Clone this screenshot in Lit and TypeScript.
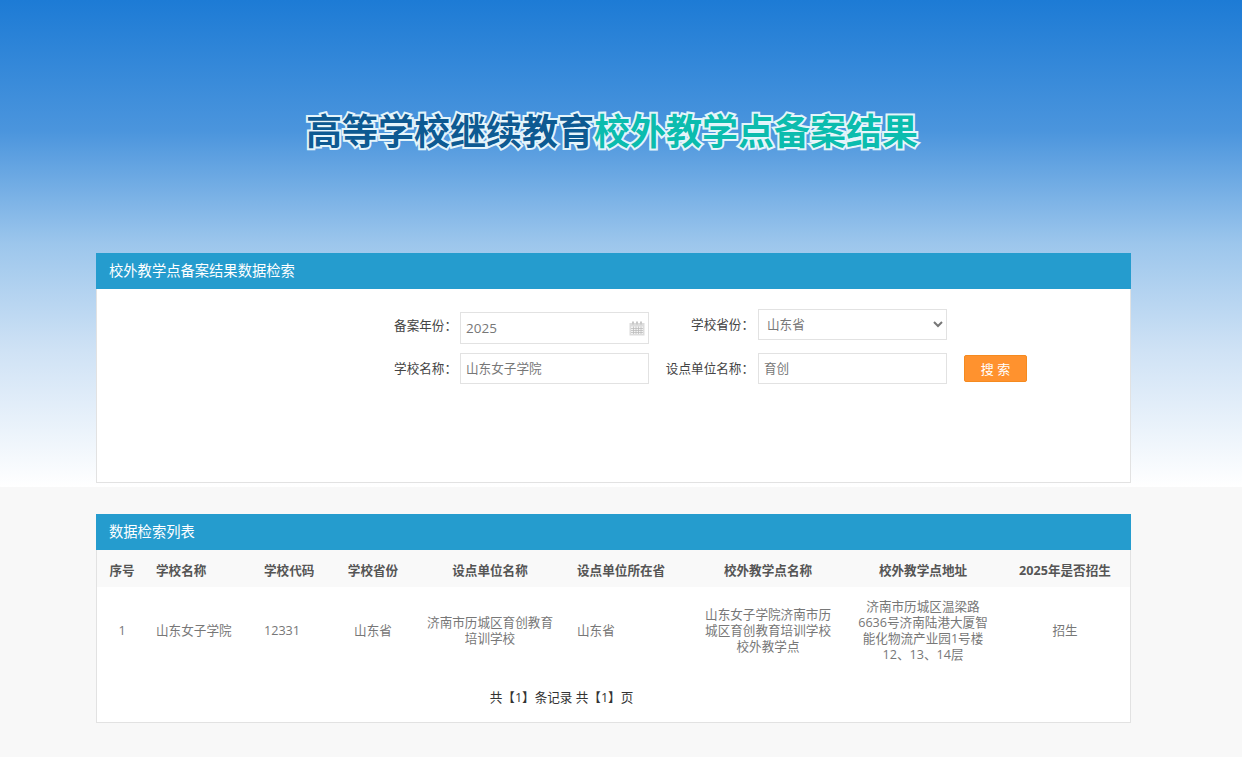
import { LitElement, html, css } from "lit";
import { customElement } from "lit/decorators.js";

@customElement("app-root")
export class AppRoot extends LitElement {
  static styles = css`
    :host {
      display: block;
      min-height: 757px;
      font-family: "Open Sans", "Noto Sans CJK SC", sans-serif;
      font-size: 12.6px;
      color: #777;
      background: #f8f8f8 linear-gradient(180deg, #1d7bd5 0%, #4b95dd 27%, #9cc6ec 50%, #cfe2f5 72%, #ffffff 100%) no-repeat;
      background-size: 100% 487px;
    }
    .hero {
      height: 253px;
      display: flex;
      justify-content: center;
      padding: 102px 18px 0 0;
      box-sizing: border-box;
    }
    .title {
      margin: 0;
      height: 54px;
      line-height: 54px;
      font-size: 36px;
      font-weight: 700;
      font-family: "Noto Sans CJK SC", sans-serif;
      white-space: nowrap;
      -webkit-text-stroke: 4px #e2f4fb;
      paint-order: stroke fill;
      text-shadow: 0 0 2px rgba(255, 255, 255, 0.7);
    }
    .t1 { color: #0d5a92; }
    .t2 { color: #0bbcae; }
    .wrap { width: 1035px; margin-left: 96px; }
    .panel {
      background: #fff;
      border: 1px solid #e2e2e2;
      border-top: 0;
      box-sizing: border-box;
    }
    .panel-head {
      height: 36px;
      line-height: 36px;
      margin: 0 -1px;
      padding-left: 13px;
      background: #259cce;
      color: #fff;
      font-size: 14.3px;
    }
    .search { height: 230px; margin-bottom: 31px; }
    .form {
      display: grid;
      grid-template-columns: 363px 189px 109px 189px 80px;
      grid-template-rows: 44px 31px;
      padding: 20px 0 0 0;
      color: #444;
    }
    .label { text-align: right; padding-right: 3px; line-height: 31px; color: #444; }
    .label.first { padding-top: 1px; }
    .label.r { padding-right: 4px; }
    .control {
      box-sizing: border-box;
      width: 189px;
      height: 31px;
      border: 1px solid #e2e2e2;
      background: #fff;
      font: inherit;
      color: #777;
      padding: 0 5px 2px;
      outline: none;
      display: block;
    }
    .date {
      height: 32px;
      margin-top: 3px;
      display: flex;
      align-items: center;
      justify-content: space-between;
      padding: 0 3px 0 5px;
      font-size: 13.5px;
      line-height: 28px;
    }
    .date svg { display: block; }
    select.control { padding: 0 4px; }
    .btn-cell { padding-left: 17px; padding-top: 2px; }
    .btn {
      display: block;
      width: 63px;
      height: 27px;
      box-sizing: border-box;
      border: 1px solid #f58a1f;
      border-radius: 2px;
      background: #ff922e;
      color: #fff;
      font: inherit;
      font-size: 13px;
      padding: 0;
    }
    .list { height: 209px; }
    table {
      width: 1033px;
      border-collapse: collapse;
      table-layout: fixed;
    }
    th {
      height: 37px;
      padding: 1px 9px 0;
      background: #f9f9f9;
      color: #555;
      font-weight: 700;
      box-sizing: border-box;
    }
    td {
      padding: 12px 9px 10px;
      height: 86px;
      line-height: 16px;
      box-sizing: border-box;
    }
    th, td { text-align: center; }
    .left { text-align: left; }
    .pager { text-align: center; color: #333; line-height: 16px; padding: 17px 104px 0 0; }
  `;

  render() {
    return html`
      <div class="hero">
        <h1 class="title"><span class="t1">高等学校继续教育</span><span class="t2">校外教学点备案结果</span></h1>
      </div>
      <div class="wrap">
        <section class="panel search">
          <div class="panel-head">校外教学点备案结果数据检索</div>
          <div class="form">
            <div class="label first">备案年份：</div>
            <div class="control date">
              <span>2025</span>
              <svg width="16" height="15" viewBox="0 0 16 15" fill="#c8c8c8">
                <rect x="0.5" y="2" width="15" height="12.5" fill="#dcdcdc"></rect>
                <rect x="3" y="0.5" width="2" height="3"></rect>
                <rect x="7" y="0.5" width="2" height="3"></rect>
                <rect x="11" y="0.5" width="2" height="3"></rect>
                <rect x="2" y="5.5" width="12" height="7.5" fill="#f3f3f3"></rect>
                <path d="M2 7.5h12M2 9.5h12M2 11.5h12M4.5 5.5v7.5M7 5.5v7.5M9.5 5.5v7.5M12 5.5v7.5" stroke="#bcbcbc" stroke-width="0.8"></path>
              </svg>
            </div>
            <div class="label r">学校省份：</div>
            <select class="control"><option>山东省</option></select>
            <div></div>

            <div class="label">学校名称：</div>
            <input class="control" .value=${"山东女子学院"} />
            <div class="label r">设点单位名称：</div>
            <input class="control" .value=${"育创"} />
            <div class="btn-cell"><button class="btn">搜 索</button></div>
          </div>
        </section>

        <section class="panel list">
          <div class="panel-head">数据检索列表</div>
          <table>
            <colgroup>
              <col style="width:50px" /><col style="width:108px" /><col style="width:79px" />
              <col style="width:78px" /><col style="width:156px" /><col style="width:122px" />
              <col style="width:156px" /><col style="width:154px" /><col style="width:130px" />
            </colgroup>
            <thead>
              <tr>
                <th>序号</th><th class="left">学校名称</th><th class="left">学校代码</th>
                <th>学校省份</th><th>设点单位名称</th><th class="left">设点单位所在省</th>
                <th>校外教学点名称</th><th>校外教学点地址</th><th>2025年是否招生</th>
              </tr>
            </thead>
            <tbody>
              <tr>
                <td>1</td><td class="left">山东女子学院</td><td class="left">12331</td>
                <td>山东省</td><td>济南市历城区育创教育培训学校</td><td class="left">山东省</td>
                <td>山东女子学院济南市历城区育创教育培训学校校外教学点</td>
                <td>济南市历城区温梁路6636号济南陆港大厦智能化物流产业园1号楼12、13、14层</td>
                <td>招生</td>
              </tr>
            </tbody>
          </table>
          <div class="pager">共【1】条记录 共【1】页</div>
        </section>
      </div>
    `;
  }
}
